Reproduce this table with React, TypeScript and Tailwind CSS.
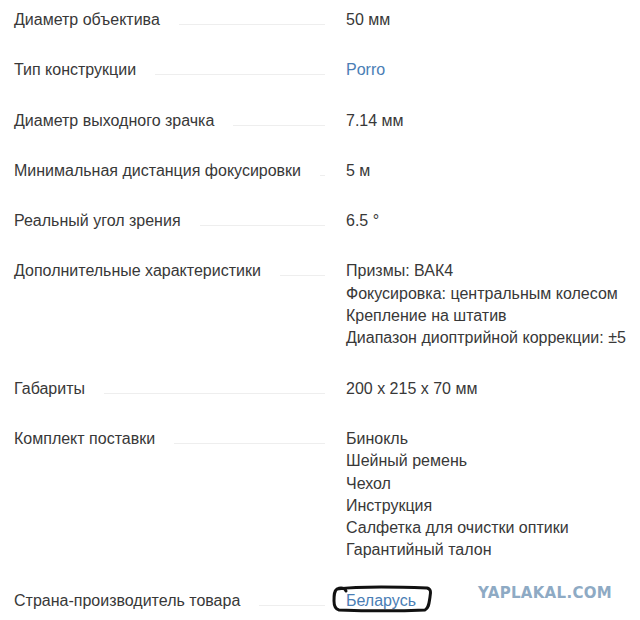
import React from "react";

type Row = { label: string; values: string[]; link?: boolean; circled?: boolean };

const rows: Row[] = [
  { label: "Диаметр объектива", values: ["50 мм"] },
  { label: "Тип конструкции", values: ["Porro"], link: true },
  { label: "Диаметр выходного зрачка", values: ["7.14 мм"] },
  { label: "Минимальная дистанция фокусировки", values: ["5 м"] },
  { label: "Реальный угол зрения", values: ["6.5 °"] },
  {
    label: "Дополнительные характеристики",
    values: [
      "Призмы: ВАК4",
      "Фокусировка: центральным колесом",
      "Крепление на штатив",
      "Диапазон диоптрийной коррекции: ±5",
    ],
  },
  { label: "Габариты", values: ["200 x 215 x 70 мм"] },
  {
    label: "Комплект поставки",
    values: [
      "Бинокль",
      "Шейный ремень",
      "Чехол",
      "Инструкция",
      "Салфетка для очистки оптики",
      "Гарантийный талон",
    ],
  },
  { label: "Страна-производитель товара", values: ["Беларусь"], link: true, circled: true },
];

const App = () => {
  return (
    <div
      className="relative w-[640px] h-[620px] bg-white overflow-hidden text-[16px] leading-[22.3px] text-[#383838]"
      style={{ fontFamily: '"Liberation Sans", Arial, sans-serif' }}
    >
      <div className="flex flex-col gap-[28px] pt-[9px] pl-[14px]">
        {rows.map((row) => (
          <div key={row.label} className="flex">
            <div className="w-[311px] flex items-start">
              <span className="whitespace-nowrap">{row.label}</span>
              <span className="flex-1 ml-[19px] mt-[15px] border-b border-[#eeeeee]" />
            </div>
            <div className="ml-[21px] flex flex-col">
              {row.values.map((v) => (
                <span
                  key={v}
                  className={
                    row.link ? "relative text-[#4a7eb5] whitespace-nowrap" : "whitespace-nowrap"
                  }
                >
                  {v}
                  {row.circled && (
                    <svg
                      className="absolute left-[-15px] top-[-7px]"
                      width="104"
                      height="32"
                      viewBox="0 0 104 32"
                      fill="none"
                    >
                      <path
                        d="M6 6 C30 3 70 4 96 5 C100 6 100 9 99 14 C98 20 98 25 94 27 C70 28 35 28 8 27 C4 26 3 23 3 18 C3 12 3 8 6 6 C10 4 14 5 15 8"
                        stroke="#111"
                        strokeWidth="3"
                        strokeLinecap="round"
                        strokeLinejoin="round"
                      />
                    </svg>
                  )}
                </span>
              ))}
            </div>
          </div>
        ))}
      </div>
      <div
        className="absolute left-[478px] top-[582px] text-[15px] font-bold tracking-[0.3px] text-[#8eaac4]"
        style={{ fontFamily: '"DejaVu Sans", sans-serif' }}
      >
        YAPLAKAL.COM
      </div>
    </div>
  );
};

export default App;
